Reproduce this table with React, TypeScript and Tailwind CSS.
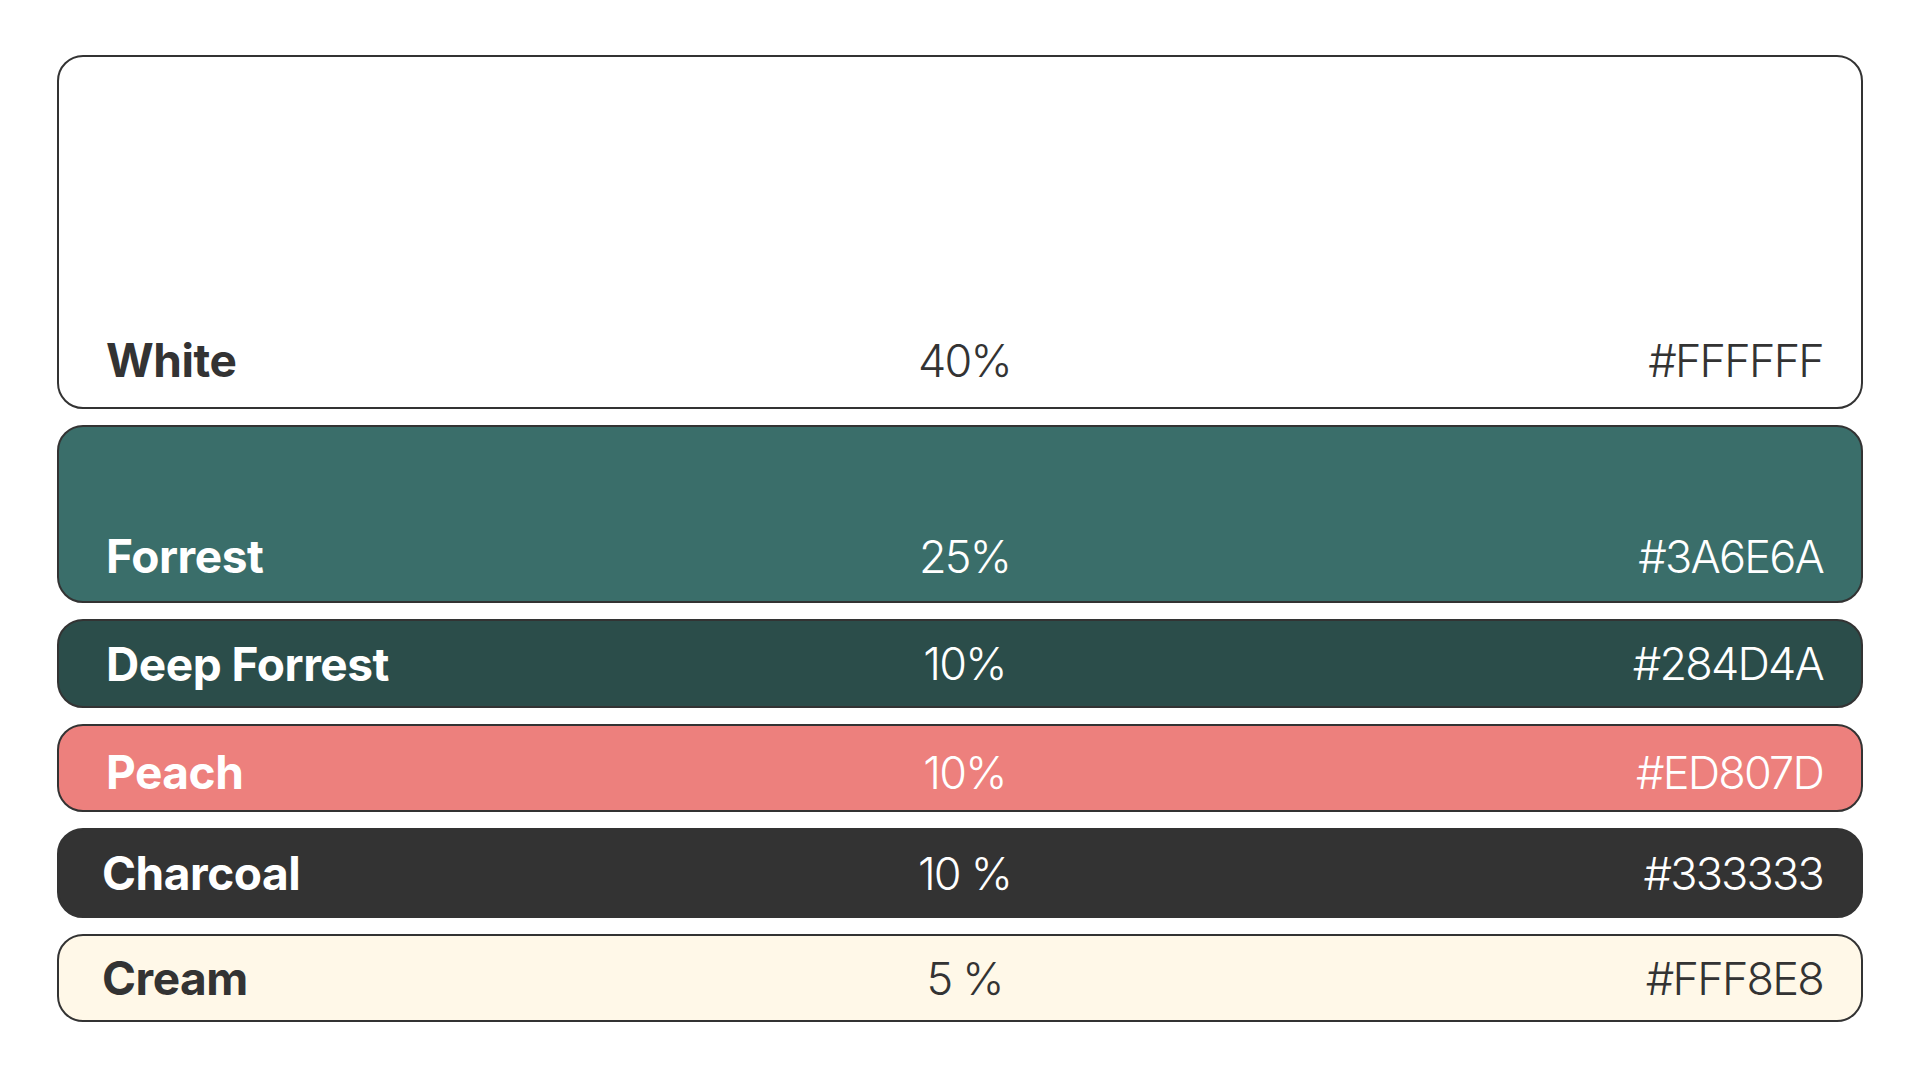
// Brand colour palette: one swatch row per colour, share in the middle,
// hex code on the right. The two primary colours get taller swatches.

interface Swatch {
  name: string;
  share: string;
  hex: string;
  box: string;
  text: string;
  nameOffset?: string;
}

const swatches: Swatch[] = [
  { name: 'White', share: '40%', hex: '#FFFFFF', box: 'bg-white h-[354px] items-end pb-[24px]', text: 'text-[#333333]' },
  { name: 'Forrest', share: '25%', hex: '#3A6E6A', box: 'bg-[#3A6E6A] h-[178px] items-end pb-[22px]', text: 'text-white' },
  { name: 'Deep Forrest', share: '10%', hex: '#284D4A', box: 'bg-[#2B4D4A] h-[89px] items-center', text: 'text-white' },
  { name: 'Peach', share: '10%', hex: '#ED807D', box: 'bg-[#ED807D] h-[88px] items-center pt-[8px]', text: 'text-white' },
  { name: 'Charcoal', share: '10 %', hex: '#333333', box: 'bg-[#333333] h-[90px] items-center', text: 'text-white', nameOffset: '-ml-[4px]' },
  { name: 'Cream', share: '5 %', hex: '#FFF8E8', box: 'bg-[#FFF8E8] h-[88px] items-center', text: 'text-[#333333]', nameOffset: '-ml-[4px]' },
];

export default function App() {
  return (
    <div className="w-[1920px] h-[1080px] bg-white font-['Inter','Liberation_Sans',sans-serif]">
      <div className="flex flex-col gap-4 px-[57px] pt-[55px]">
        {swatches.map((s) => (
          <div
            key={s.name}
            className={
              'grid grid-cols-3 rounded-[26px] border-2 border-[#333333] pl-[47px] pr-[38px] ' +
              s.box +
              ' ' +
              s.text
            }
          >
            <div className={'text-[46px] font-bold leading-none tracking-[-0.01em] ' + (s.nameOffset ?? '')}>
              {s.name}
            </div>
            <div className="text-center text-[45px] font-light leading-none tracking-[-0.04em]">{s.share}</div>
            <div className="text-right text-[45px] font-light leading-none tracking-[-0.04em]">{s.hex}</div>
          </div>
        ))}
      </div>
    </div>
  );
}
